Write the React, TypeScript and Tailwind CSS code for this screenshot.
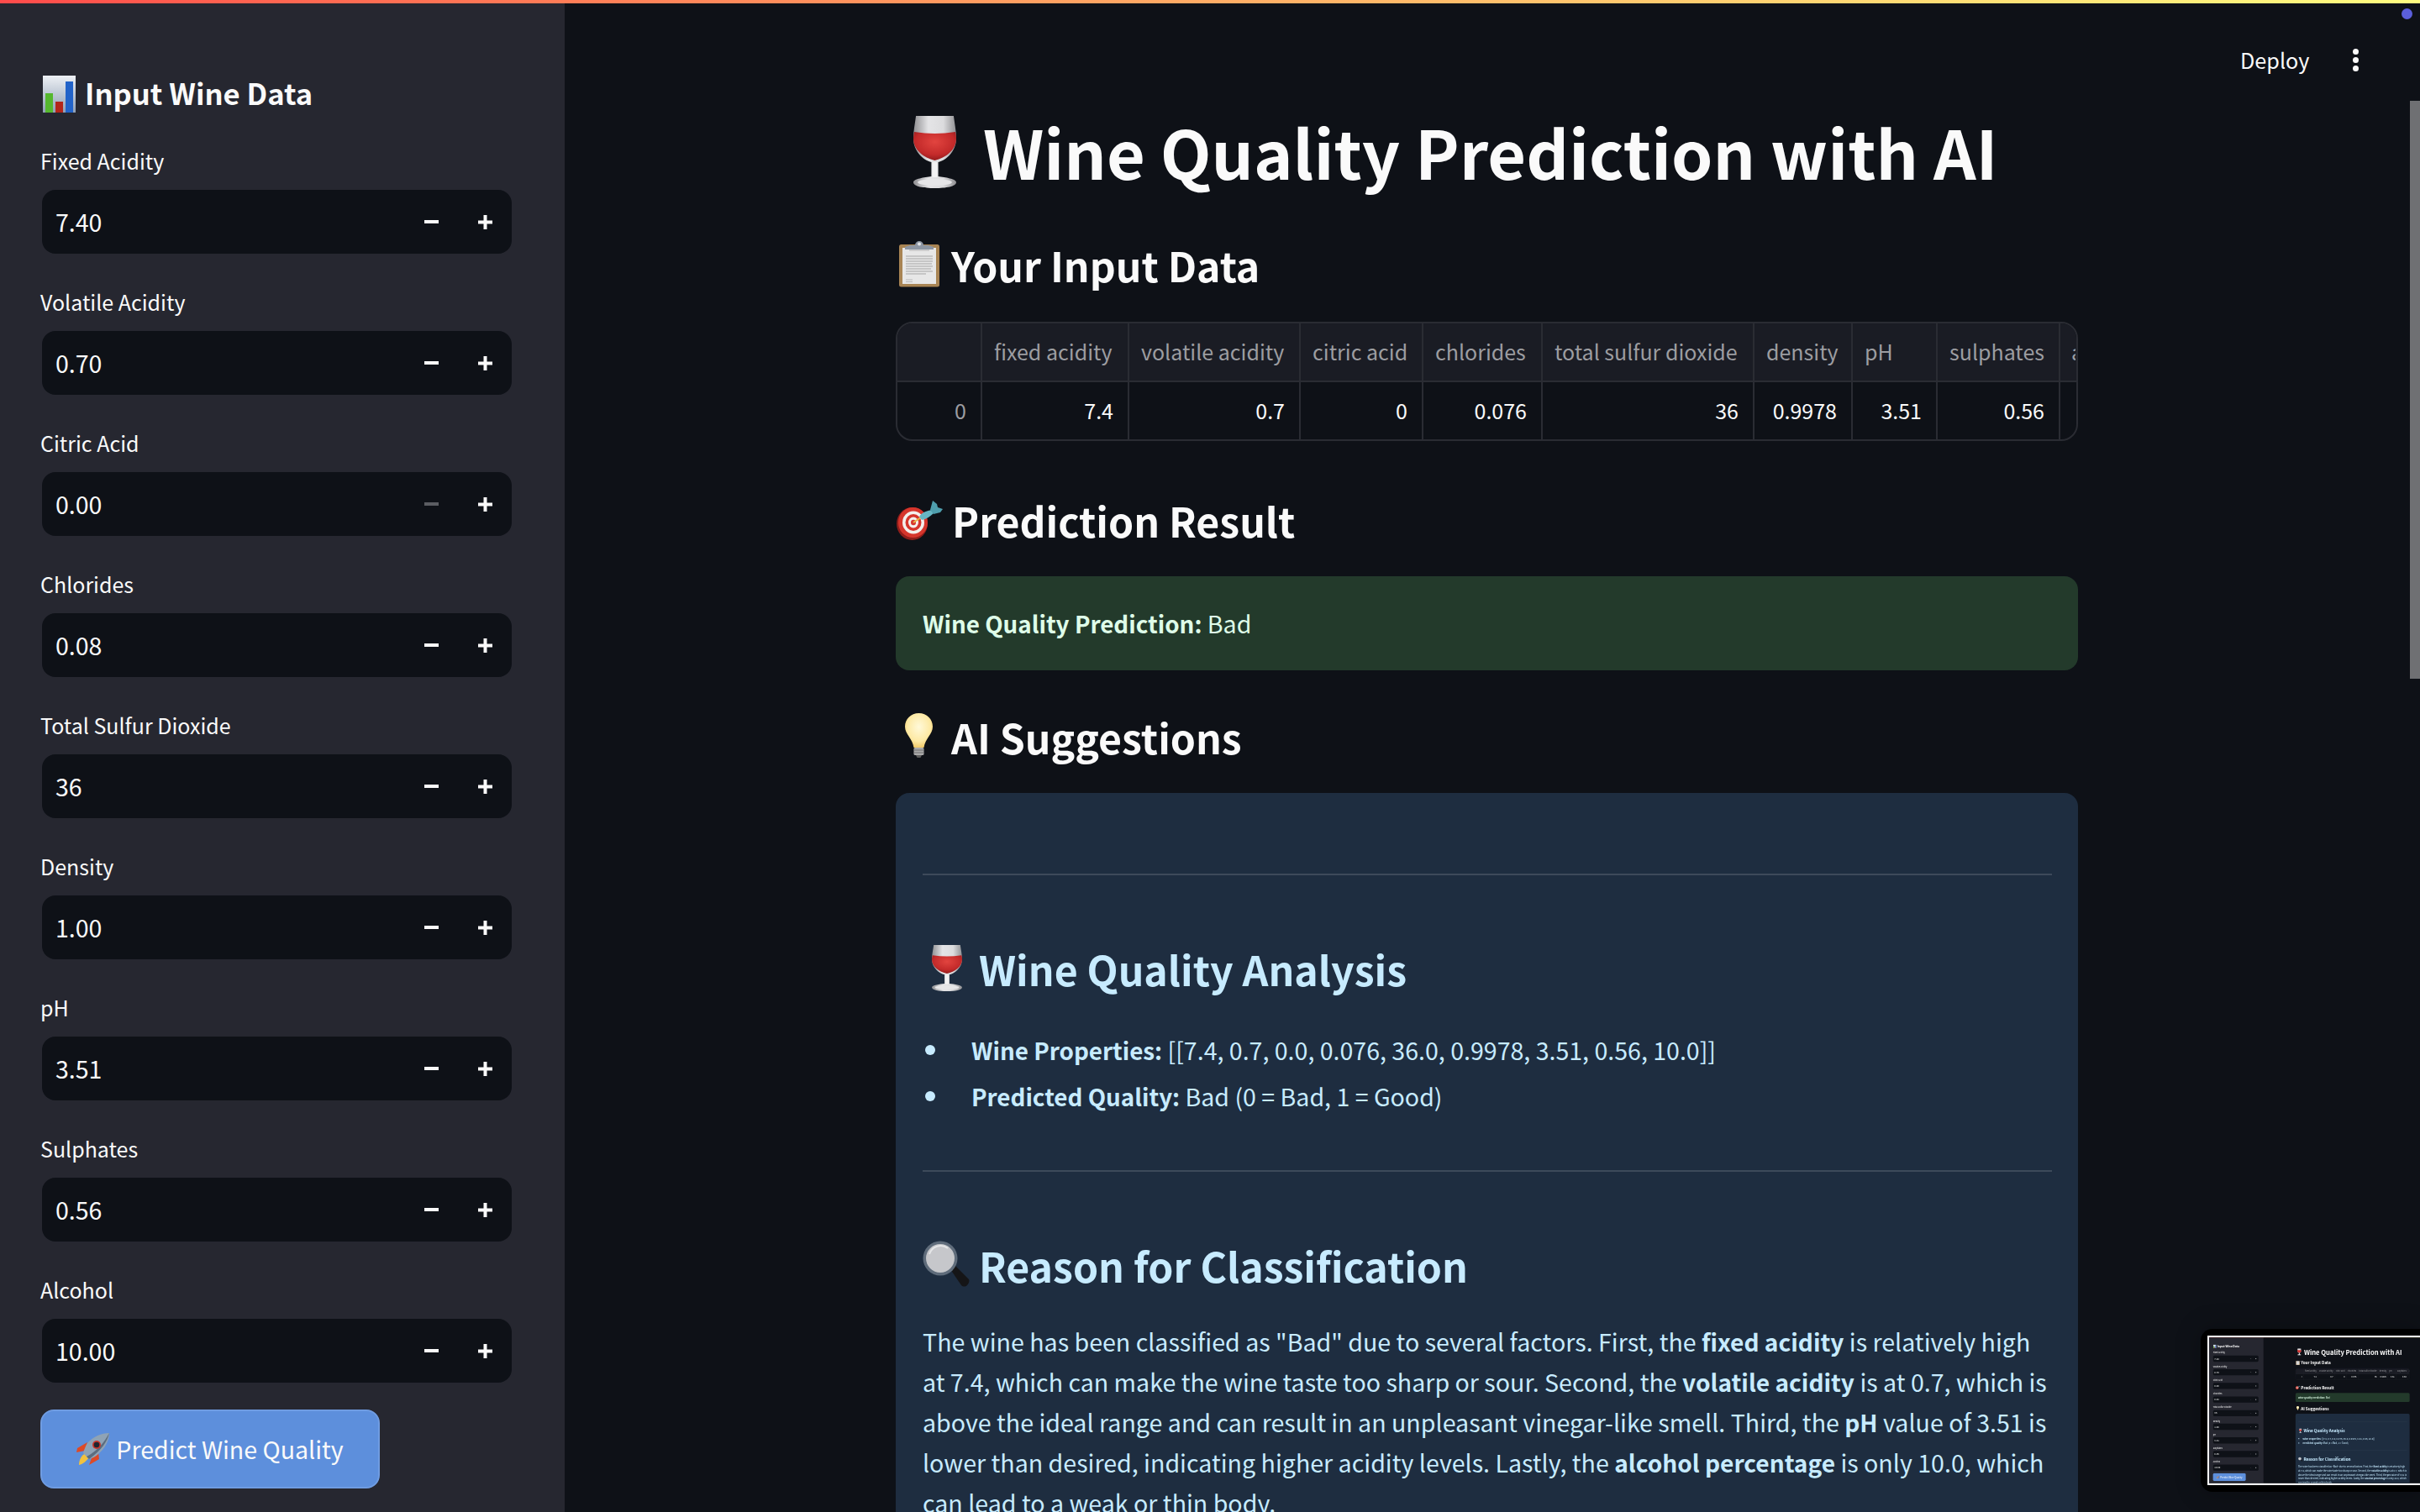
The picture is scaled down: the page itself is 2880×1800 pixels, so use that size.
import React from "react";

type IconProps = { className?: string };

function WineIcon({ className }: IconProps) {
  return (
    <svg viewBox="0 0 50 86" preserveAspectRatio="none" className={className}>
      <defs>
        <linearGradient id="wg" x1="0" x2="1" y1="0" y2="0">
          <stop offset="0" stopColor="#8f8f92" />
          <stop offset="0.35" stopColor="#e4e4e6" />
          <stop offset="0.7" stopColor="#dcdcde" />
          <stop offset="1" stopColor="#8f8f92" />
        </linearGradient>
        <radialGradient id="wr" cx="0.5" cy="0.35" r="0.75">
          <stop offset="0" stopColor="#e2443f" />
          <stop offset="0.6" stopColor="#c32a2a" />
          <stop offset="1" stopColor="#7c1416" />
        </radialGradient>
      </defs>
      <path d="M3 0H47C48 9 50 17 50 27C50 42 38 53 29 55V72C37 73 50 75 50 79C50 84 38 86 25 86C12 86 0 84 0 79C0 75 13 73 21 72V55C12 53 0 42 0 27C0 17 2 9 3 0Z" fill="url(#wg)" />
      <path d="M1 19Q25 23 49 19C50 23 50 25 50 27C50 40 38 50 25 53C12 50 0 40 0 27C0 25 0.4 22 1 19Z" fill="url(#wr)" />
      <rect x="22" y="55" width="6" height="18" fill="#f2f2f3" />
      <ellipse cx="25" cy="79" rx="20" ry="4" fill="#e6e6e8" />
    </svg>
  );
}

function ClipboardIcon({ className }: IconProps) {
  return (
    <svg viewBox="0 0 48 56" className={className}>
      <rect x="0" y="5" width="48" height="50.5" rx="2.5" fill="#a88453" />
      <rect x="4" y="9" width="40" height="43" fill="#e7e7e7" />
      <path d="M12 12h24" stroke="#b5b5b5" strokeWidth="1" />
      <path d="M8 19h32M8 22h32M8 25h32M8 28h31M8 31h32M8 34h30M8 37h32M8 40h24" stroke="#a5a5a5" strokeWidth="1" />
      <path d="M8 47h8M8 49.5h8" stroke="#bbb" strokeWidth="1" />
      <path d="M7 11V8L13 6H19A5 5 0 0 1 29 6H35L41 8V11Z" fill="#8d96a3" />
      <circle cx="24" cy="4.5" r="2" fill="#dfe2e6" />
    </svg>
  );
}

function TargetIcon({ className }: IconProps) {
  return (
    <svg viewBox="0 0 55 47" className={className}>
      <ellipse cx="18.5" cy="27.5" rx="18.5" ry="19.5" fill="#8f1d1a" />
      <ellipse cx="19.5" cy="26" rx="17.5" ry="18" fill="#d6352c" />
      <ellipse cx="20" cy="26" rx="13" ry="13.5" fill="#f4efec" />
      <ellipse cx="20" cy="26" rx="9.5" ry="10" fill="#d6352c" />
      <ellipse cx="20" cy="26" rx="6" ry="6.5" fill="#f4efec" />
      <ellipse cx="20" cy="26" rx="3" ry="3.2" fill="#d6352c" />
      <path d="M20 26L29 20" stroke="#e9b94a" strokeWidth="2" />
      <path d="M27 19C30 14 36 12 42 11L44 15C40 19 35 22 30 23Z" fill="#67b6c4" />
      <path d="M40 11L43 0L48 4L49 8L55 10L52 14L44 16Z" fill="#4f9fae" />
    </svg>
  );
}

function BulbIcon({ className }: IconProps) {
  return (
    <svg viewBox="0 0 33 53" className={className}>
      <defs>
        <radialGradient id="bg" cx="0.5" cy="0.4" r="0.65">
          <stop offset="0" stopColor="#fff9d9" />
          <stop offset="0.65" stopColor="#fde9a3" />
          <stop offset="1" stopColor="#eec25c" />
        </radialGradient>
      </defs>
      <path d="M16.5 0C26 0 33 7 33 16C33 25 24 30 22.5 41H10.5C9 30 0 25 0 16C0 7 7 0 16.5 0Z" fill="url(#bg)" />
      <rect x="10.5" y="41" width="12" height="9" rx="1.5" fill="#a9a9a9" />
      <path d="M10.5 44h12M10.5 47h12" stroke="#6f6f6f" strokeWidth="1" />
      <path d="M13 50h7l-1.5 3h-4Z" fill="#5c5c5c" />
    </svg>
  );
}

function MagnifierIcon({ className }: IconProps) {
  return (
    <svg viewBox="0 0 56 55" className={className}>
      <path d="M33 34L38 29L55 46C56 48 55 51 53 53C51 55 48 55 46 53Z" fill="#151517" />
      <circle cx="21" cy="21" r="20.5" fill="#5f6c7b" />
      <circle cx="21" cy="21" r="17" fill="#c6c7cb" />
      <path d="M8 16A14 14 0 0 1 30 9" stroke="#e5e6e8" strokeWidth="2" fill="none" />
    </svg>
  );
}

function ChartIcon({ className }: IconProps) {
  return (
    <svg viewBox="0 0 39 44" className={className}>
      <defs>
        <linearGradient id="cg" x1="0" x2="0" y1="0" y2="1">
          <stop offset="0" stopColor="#eef1f5" />
          <stop offset="1" stopColor="#8f9fb5" />
        </linearGradient>
      </defs>
      <rect width="39" height="44" fill="url(#cg)" />
      <rect x="3" y="21" width="9" height="23" fill="#55b82e" />
      <rect x="15" y="31" width="9" height="13" fill="#b3261a" />
      <rect x="27" y="7" width="9" height="37" fill="#2263c9" />
    </svg>
  );
}

function RocketIcon({ className }: IconProps) {
  return (
    <svg viewBox="0 0 39 38" className={className}>
      <path d="M3 38C3 32 6 26 11 24L15 29C12 33 8 37 3 38Z" fill="#f2c23f" />
      <path d="M13 11L1 18L0 23L10 21Z" fill="#dd4a26" />
      <path d="M26 23L27 31L15 38L19 27Z" fill="#dd4a26" />
      <path d="M39 0C30 0 20 4 13 12C11 15 9 20 8 24L15 31C19 30 23 28 26 25C34 18 39 9 39 0Z" fill="#8fa3b5" />
      <path d="M39 0C37 10 30 20 15 31L12 28C24 22 34 10 39 0Z" fill="#5c6d7f" />
      <ellipse cx="24" cy="14" rx="5" ry="5" fill="#c8342a" />
      <ellipse cx="24" cy="14" rx="3.3" ry="3.3" fill="#1f2530" />
    </svg>
  );
}

function MinusGlyph({ dim }: { dim?: boolean }) {
  return (
    <svg viewBox="0 0 17 4" className="w-[17px] h-[4px]">
      <rect width="17" height="4" fill={dim ? "#5b5d62" : "#fafafa"} />
    </svg>
  );
}

function PlusGlyph() {
  return (
    <svg viewBox="0 0 17 17" className="w-[17px] h-[17px]">
      <path d="M0 8.5H17M8.5 0V17" stroke="#fafafa" strokeWidth="4" />
    </svg>
  );
}

const inputs: { label: string; value: string; dim?: boolean }[] = [
  { label: "Fixed Acidity", value: "7.40" },
  { label: "Volatile Acidity", value: "0.70" },
  { label: "Citric Acid", value: "0.00", dim: true },
  { label: "Chlorides", value: "0.08" },
  { label: "Total Sulfur Dioxide", value: "36" },
  { label: "Density", value: "1.00" },
  { label: "pH", value: "3.51" },
  { label: "Sulphates", value: "0.56" },
  { label: "Alcohol", value: "10.00" },
];

const tableHead = ["", "fixed acidity", "volatile acidity", "citric acid", "chlorides", "total sulfur dioxide", "density", "pH", "sulphates", "alcohol"];
const tableRow = ["0", "7.4", "0.7", "0", "0.076", "36", "0.9978", "3.51", "0.56", ""];

function Sidebar() {
  return (
    <aside className="w-[672px] shrink-0 h-[1796px] bg-[#262730] pl-[48px] overflow-hidden">
      <h2 className="flex items-center h-[48px] mt-[84px] mb-[30px] text-[34.6px] leading-[48px] font-semibold text-[#fafafa]">
        <ChartIcon className="w-[39px] h-[44px] ml-[3px] shrink-0" />
        <span className="ml-[11px] pb-[4px]">Input Wine Data</span>
      </h2>
      {inputs.map((it) => (
        <div key={it.label} className="mb-[32px]">
          <div className="h-[52px] mb-[8px] pb-[3px] flex items-center text-[25px] leading-[36px] text-[#fafafa]">{it.label}</div>
          <div className="ml-[2px] w-[559px] h-[76px] rounded-[16px] bg-[#0e1117] flex items-center">
            <span className="flex-1 pl-[16px] text-[28.55px] leading-[40px] text-[#fafafa]">{it.value}</span>
            <span className="w-[64px] flex justify-center"><MinusGlyph dim={it.dim} /></span>
            <span className="w-[64px] flex justify-center"><PlusGlyph /></span>
          </div>
        </div>
      ))}
      <button className="mt-[4px] w-[404px] h-[94px] rounded-[16px] bg-[#5d8fdc] border-2 border-[#6f9ce2] flex items-center justify-center text-[28.55px] leading-[40px] text-[#fafafa]">
        <RocketIcon className="w-[39px] h-[38px] shrink-0" />
        <span className="ml-[8px]">Predict Wine Quality</span>
      </button>
    </aside>
  );
}

function DataTable() {
  return (
    <div className="mt-[37px] w-[1407px] h-[142px] rounded-[20px] border-2 border-[#2a2c33] overflow-hidden text-[25px] leading-[36px]">
      <div className="grid grid-cols-[101px_175px_204px_146px_142px_252px_117px_101px_146px_18px] h-[70px] bg-[#1a1c24] border-b-2 border-[#2a2c33] text-[#9c9da1]">
        {tableHead.map((h, i) => (
          <div key={i} className="flex items-center pl-[14px] pb-[3px] border-r-2 border-[#2a2c33] overflow-hidden whitespace-nowrap last:border-r-0 last:pl-[13px]">{h}</div>
        ))}
      </div>
      <div className="grid grid-cols-[101px_175px_204px_146px_142px_252px_117px_101px_146px_18px] h-[68px] text-[#fafafa]">
        {tableRow.map((c, i) => (
          <div key={i} className={i === 0 ? "flex items-center justify-end pr-[17px] pb-[3px] border-r-2 border-[#2a2c33] text-[#9c9da1]" : "flex items-center justify-end pr-[17px] pb-[3px] border-r-2 border-[#2a2c33] last:border-r-0"}>{c}</div>
        ))}
      </div>
    </div>
  );
}

function MainContent() {
  return (
    <main className="flex-1 h-[1796px] overflow-hidden bg-[#0e1117] pl-[394px] pt-[121px] text-[#fafafa]">
      <div className="w-[1407px]">
        <h1 className="flex items-center h-[100px] text-[79px] leading-[100px] font-bold whitespace-nowrap">
          <WineIcon className="w-[51px] h-[86px] ml-[21px] mt-[12px] shrink-0" />
          <span className="ml-[32px] pt-[10px]">Wine Quality Prediction with AI</span>
        </h1>
        <h2 className="mt-[51px] flex items-center h-[70px] text-[48.2px] leading-[70px] font-semibold">
          <ClipboardIcon className="w-[48px] h-[56px] ml-[4px] mt-[6px] shrink-0" />
          <span className="ml-[14px] pt-[8px]">Your Input Data</span>
        </h2>
        <DataTable />
        <h2 className="mt-[56px] flex items-center h-[70px] text-[48.2px] leading-[70px] font-semibold">
          <TargetIcon className="w-[55px] h-[47px] ml-[1px] mt-[6px] shrink-0" />
          <span className="ml-[11px] pt-[6px]">Prediction Result</span>
        </h2>
        <div className="mt-[35px] h-[112px] rounded-[16px] bg-[#233a2b] pl-[32px] flex items-center text-[28.55px] leading-[48px] text-[#dffde9]">
          <p><strong className="font-semibold text-[27.8px]">Wine Quality Prediction:</strong> Bad</p>
        </div>
        <h2 className="mt-[40px] flex items-center h-[70px] text-[48.2px] leading-[70px] font-semibold">
          <BulbIcon className="w-[33px] h-[53px] ml-[11px] mt-[4px] shrink-0" />
          <span className="ml-[22px] pt-[8px]">AI Suggestions</span>
        </h2>
        <section className="mt-[36px] rounded-t-[16px] bg-[#1e2d40] pl-[32px] pr-[31px] pt-[96px] h-[900px] text-[28.55px] leading-[48px] text-[#c7ebff]">
          <hr className="border-0 h-[2px] bg-[#3d4a5a]" />
          <h3 className="mt-[73px] mb-[39px] flex items-center h-[70px] text-[48.2px] leading-[70px] font-semibold">
            <WineIcon className="w-[36px] h-[55px] ml-[11px] mt-[4px] shrink-0" />
            <span className="ml-[20px] pt-[6px]">Wine Quality Analysis</span>
          </h3>
          <ul>
            <li className="flex items-center h-[48px] mb-[7px]">
              <span className="w-[12px] h-[12px] rounded-full bg-[#c7ebff] ml-[3px] mt-[3px] shrink-0" />
              <span className="ml-[43px] pt-[4px]"><strong className="font-semibold text-[27.8px]">Wine Properties:</strong> [[7.4, 0.7, 0.0, 0.076, 36.0, 0.9978, 3.51, 0.56, 10.0]]</span>
            </li>
            <li className="flex items-center h-[48px]">
              <span className="w-[12px] h-[12px] rounded-full bg-[#c7ebff] ml-[3px] mt-[3px] shrink-0" />
              <span className="ml-[43px] pt-[4px]"><strong className="font-semibold text-[27.8px]">Predicted Quality:</strong> Bad (0 = Bad, 1 = Good)</span>
            </li>
          </ul>
          <hr className="mt-[66px] border-0 h-[2px] bg-[#3d4a5a]" />
          <h3 className="mt-[73px] mb-[35px] flex items-center h-[70px] text-[48.2px] leading-[70px] font-semibold">
            <MagnifierIcon className="w-[56px] h-[55px] mt-[3px] shrink-0" />
            <span className="ml-[11px] pt-[6px]">Reason for Classification</span>
          </h3>
          <p className="whitespace-nowrap text-[28.6px]">
            The wine has been classified as "Bad" due to several factors. First, the <strong className="font-semibold text-[28.1px]">fixed acidity</strong> is relatively high<br />
            at 7.4, which can make the wine taste too sharp or sour. Second, the <strong className="font-semibold text-[28.1px]">volatile acidity</strong> is at 0.7, which is<br />
            above the ideal range and can result in an unpleasant vinegar-like smell. Third, the <strong className="font-semibold text-[28.1px]">pH</strong> value of 3.51 is<br />
            lower than desired, indicating higher acidity levels. Lastly, the <strong className="font-semibold text-[28.1px]">alcohol percentage</strong> is only 10.0, which<br />
            can lead to a weak or thin body.
          </p>
        </section>
      </div>
    </main>
  );
}

function Screen() {
  return (
    <div className="w-[2880px] h-[1800px] overflow-hidden bg-[#0e1117] font-['Noto_Sans_CJK_SC','Noto_Sans',sans-serif]">
      <div className="h-[4px] bg-gradient-to-r from-[#ff4b4b] to-[#fffd80]" />
      <div className="flex">
        <Sidebar />
        <MainContent />
      </div>
    </div>
  );
}

export default function App() {
  return (
    <div className="relative w-[2880px] h-[1800px] overflow-hidden">
      <Screen />
      <div className="absolute left-[2666px] top-[53px] text-[25.2px] leading-[36px] text-[#fafafa] font-['Noto_Sans_CJK_SC',sans-serif]">Deploy</div>
      <div className="absolute left-[2800px] top-[58px] flex flex-col gap-[3px]">
        <span className="w-[7px] h-[7px] rounded-full bg-[#fafafa]" />
        <span className="w-[7px] h-[7px] rounded-full bg-[#fafafa]" />
        <span className="w-[7px] h-[7px] rounded-full bg-[#fafafa]" />
      </div>
      <div className="absolute left-[2858px] top-[10px] w-[13px] h-[13px] rounded-full bg-[#5b5fdc]" />
      <div className="absolute left-[2868px] top-[120px] w-[12px] h-[688px] bg-[#6f7073]" />
      <div className="absolute left-[2619px] top-[1582px] w-[261px] h-[194px] rounded-l-[14px] bg-black shadow-[0_0_30px_rgba(0,0,0,0.25)]">
        <div aria-hidden="true" className="absolute left-[8px] top-[8px] w-[253px] h-[178px] overflow-hidden bg-white">
          <div className="absolute left-[2px] top-[2px] origin-top-left scale-[0.0965] blur-[4px]">
            <Screen />
          </div>
        </div>
      </div>
    </div>
  );
}
